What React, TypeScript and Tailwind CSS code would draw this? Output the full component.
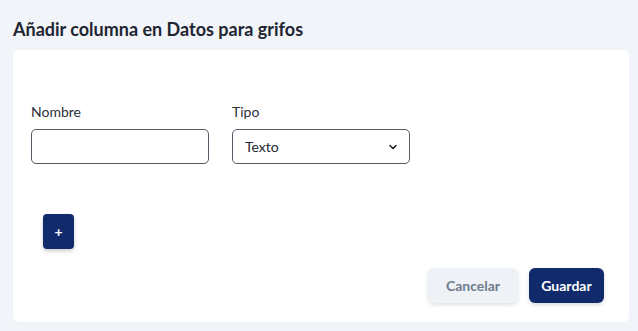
import React from "react";

export default function App() {
  return (
    <div className="w-[638px] h-[331px] bg-[#f1f4f8] overflow-hidden" style={{ fontFamily: "Lato, 'Noto Sans', sans-serif" }}>
      <div className="px-[13px] pt-[8px]">
        <h1 className="text-[18px] font-bold text-[#1f2533] leading-[20px] h-[42px] flex items-center">
          Añadir columna en Datos para grifos
        </h1>
        <div className="bg-white rounded-[6px] w-[616px] h-[272px] flex flex-col">
          <div className="flex gap-[23px] pl-[18px] pt-[53px]">
            <div className="flex flex-col">
              <label className="text-[14px] text-[#2b2f38] leading-[18px] mb-[8px]">Nombre</label>
              <input className="w-[178px] h-[35px] border border-[#555b66] rounded-[5px] outline-none px-3" />
            </div>
            <div className="flex flex-col">
              <label className="text-[14px] text-[#2b2f38] leading-[18px] mb-[8px]">Tipo</label>
              <div className="w-[178px] h-[35px] border border-[#555b66] rounded-[5px] flex items-center justify-between pl-[12px] pr-[11px]">
                <span className="text-[14px] text-[#23272f]">Texto</span>
                <svg width="10" height="10" viewBox="0 0 10 10"><path d="M2 3.5 L5 6.5 L8 3.5" fill="none" stroke="#222" strokeWidth="1.6" strokeLinecap="round" strokeLinejoin="round" /></svg>
              </div>
            </div>
          </div>
          <div className="pl-[30px] pt-[50px]">
            <button className="w-[31px] h-[35px] bg-[#112a6c] rounded-[4px] text-white text-[14px] font-bold flex items-center justify-center shadow-[0_2px_4px_rgba(0,0,0,0.2)]">+</button>
          </div>
          <div className="flex justify-end gap-[11px] pr-[25px] pt-[19px]">
            <button className="w-[90px] h-[35px] bg-[#eef2f7] rounded-[6px] text-[14px] font-bold text-[#6f7a8c] shadow-[0_2px_4px_rgba(0,0,0,0.12)]">Cancelar</button>
            <button className="w-[75px] h-[35px] bg-[#112a6c] rounded-[6px] text-[14px] font-bold text-white shadow-[0_2px_4px_rgba(0,0,0,0.15)]">Guardar</button>
          </div>
        </div>
      </div>
    </div>
  );
}
